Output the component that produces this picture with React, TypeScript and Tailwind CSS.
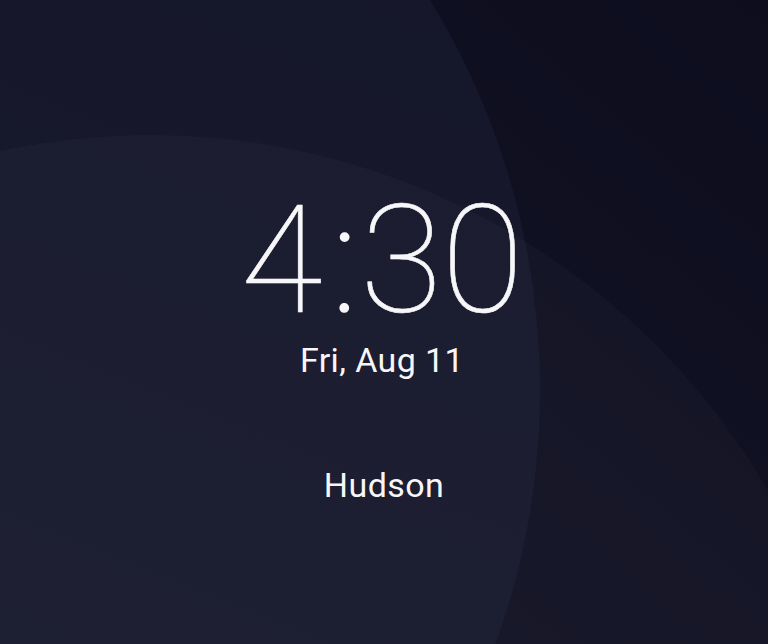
import React from 'react';

// Wallpaper: two huge overlapping discs on a deep navy field.
function Wallpaper() {
  return (
    <svg
      className="absolute inset-0 h-full w-full"
      viewBox="0 0 768 644"
      preserveAspectRatio="none"
      aria-hidden
    >
      <defs>
        <linearGradient id="base" x1="1" y1="0" x2="0" y2="1">
          <stop offset="0" stopColor="#0d0d1e" />
          <stop offset="1" stopColor="#151627" />
        </linearGradient>
        <linearGradient id="disc" x1="0.6" y1="0" x2="0.2" y2="1">
          <stop offset="0" stopColor="#15162a" />
          <stop offset="1" stopColor="#1b1d31" />
        </linearGradient>
      </defs>
      <rect width="768" height="644" fill="url(#base)" />
      <circle cx="-206" cy="390" r="746" fill="url(#disc)" />
      <circle cx="150" cy="850" r="715" fill="#ffffff" fillOpacity="0.022" />
    </svg>
  );
}

export default function App() {
  return (
    <div className="relative h-[644px] w-[768px] overflow-hidden bg-[#0f0f20]">
      <Wallpaper />
      <div
        className="relative flex flex-col items-center pt-[186px] text-[#f7f7f9]"
        style={{ fontFamily: 'Roboto, "Noto Sans", sans-serif' }}
      >
        <div className="flex text-[150px] font-thin leading-none -translate-x-[5px] [-webkit-text-stroke:0.6px_#f7f7f9]">
          <span className="tracking-[3px]">4</span>
          <span className="translate-x-[6px] tracking-[3px] [-webkit-text-stroke:1.6px_#f7f7f9]">:</span>
          <span className="translate-x-[5px] tracking-[-1px]">30</span>
        </div>
        <div className="mt-[7px] text-[34px] leading-none tracking-[0.4px] -translate-x-[2px]">Fri, Aug 11</div>
        <div className="mt-[91px] text-[34px] leading-none tracking-[0.4px]">Hudson</div>
      </div>
    </div>
  );
}
